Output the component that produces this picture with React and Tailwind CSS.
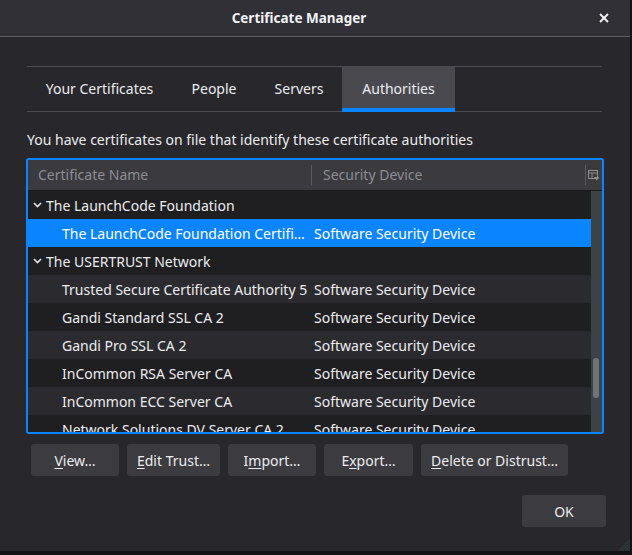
import React from 'react';

const FONT = { fontFamily: '"Noto Sans", "Open Sans", sans-serif' };

const TABS = [
  { label: 'Your Certificates', w: 'w-[145px]' },
  { label: 'People', w: 'w-[84px]' },
  { label: 'Servers', w: 'w-[86px]' },
  { label: 'Authorities', w: 'w-[113px]', active: true },
];

const ROWS = [
  { group: true, name: 'The LaunchCode Foundation' },
  { name: 'The LaunchCode Foundation Certifi…', device: 'Software Security Device', selected: true },
  { group: true, name: 'The USERTRUST Network' },
  { name: 'Trusted Secure Certificate Authority 5', device: 'Software Security Device' },
  { name: 'Gandi Standard SSL CA 2', device: 'Software Security Device' },
  { name: 'Gandi Pro SSL CA 2', device: 'Software Security Device' },
  { name: 'InCommon RSA Server CA', device: 'Software Security Device' },
  { name: 'InCommon ECC Server CA', device: 'Software Security Device' },
  { name: 'Network Solutions DV Server CA 2', device: 'Software Security Device' },
];

const BUTTONS = [
  { pre: '', key: 'V', post: 'iew…', w: 'w-[88px]' },
  { pre: '', key: 'E', post: 'dit Trust…', w: 'w-[93px]' },
  { pre: 'I', key: 'm', post: 'port…', w: 'w-[88px]' },
  { pre: 'E', key: 'x', post: 'port…', w: 'w-[89px]' },
  { pre: '', key: 'D', post: 'elete or Distrust…', w: 'w-[147px]' },
];

function Chevron() {
  return (
    <svg width="9" height="6" viewBox="0 0 9 6" className="shrink-0">
      <polyline points="1,1 4.5,4.5 8,1" fill="none" stroke="#e6e6ea" strokeWidth="1.6" />
    </svg>
  );
}

function ColumnPicker() {
  return (
    <svg width="12" height="11" viewBox="0 0 12 11">
      <rect x="0.5" y="0.5" width="9" height="8" fill="none" stroke="#8d8d92" />
      <line x1="0.5" y1="3" x2="9.5" y2="3" stroke="#8d8d92" />
      <line x1="4" y1="3" x2="4" y2="8.5" stroke="#8d8d92" />
      <polygon points="6,7 11.5,7 8.75,10.5" fill="#8d8d92" />
    </svg>
  );
}

export default function App() {
  return (
    <div className="w-[632px] h-[555px] bg-[#141416] overflow-hidden text-[#ececef]" style={FONT}>
      <div className="h-[551px] w-[630px] bg-[#28282c] flex flex-col relative">
        {/* Title bar */}
        <div className="h-[37px] shrink-0 bg-[#303036] border-b border-[#5d5d63] flex items-center justify-center pr-[32px] relative">
          <span className="text-[13.5px] font-bold text-[#f2f2f4]">Certificate Manager</span>
          <svg width="10" height="10" viewBox="0 0 10 10" className="absolute left-[599px] top-[13px]">
            <line x1="1" y1="1" x2="9" y2="9" stroke="#f4f4f6" strokeWidth="1.8" />
            <line x1="9" y1="1" x2="1" y2="9" stroke="#f4f4f6" strokeWidth="1.8" />
          </svg>
        </div>

        {/* Tabs */}
        <div className="mt-[29px] ml-[27px] w-[575px] h-[46px] border-t border-b border-[#4b4b51] flex">
          {TABS.map((t) => (
            <div
              key={t.label}
              className={`${t.w} flex items-center justify-center text-[14px] pb-[2px] ${
                t.active ? 'bg-[#49494f] border-b-4 border-[#0a84ff] -mb-px pt-[3px]' : ''
              }`}
            >
              {t.label}
            </div>
          ))}
        </div>

        <div className="mt-[18px] ml-[27px] h-[20px] leading-[20px] text-[14px]">
          You have certificates on file that identify these certificate authorities
        </div>

        {/* Tree */}
        <div className="mt-[8px] ml-[26px] w-[578px] h-[276px] border-2 border-[#0a84ff] rounded-[3px] overflow-hidden flex flex-col">
          <div className="h-[31px] shrink-0 bg-[#3a3a3f] border-b border-[#1c1c1f] flex items-center pb-[1px] text-[14px] text-[#8d8d92]">
            <div className="w-[283px] pl-[10px]">Certificate Name</div>
            <div className="w-px h-[20px] bg-[#5a5a60]" />
            <div className="w-[273px] pl-[11px]">Security Device</div>
            <div className="w-px h-[20px] bg-[#5a5a60]" />
            <div className="pl-[2px] pt-[2px]">
              <ColumnPicker />
            </div>
          </div>
          <div className="flex flex-1 min-h-0">
            <div className="flex-1 overflow-hidden">
              {ROWS.map((r, i) => (
                <div
                  key={i}
                  className={`h-[28px] flex items-center text-[14px] whitespace-nowrap ${
                    r.selected ? 'bg-[#0a84ff] text-white' : i % 2 === 0 ? 'bg-[#1f1f22]' : 'bg-[#2b2b2f]'
                  }`}
                >
                  {r.group ? (
                    <div className="flex items-center gap-[4px] pl-[5px]">
                      <Chevron />
                      <span>{r.name}</span>
                    </div>
                  ) : (
                    <>
                      <div className="w-[283px] pl-[34px] overflow-hidden">{r.name}</div>
                      <div className="pl-[3px]">{r.device}</div>
                    </>
                  )}
                </div>
              ))}
            </div>
            <div className="w-[11px] shrink-0 bg-[#3a4447] relative">
              <div className="absolute left-[2px] top-[167px] w-[6px] h-[40px] rounded-full bg-[#6c7577]" />
            </div>
          </div>
        </div>

        {/* Action buttons */}
        <div className="mt-[10px] ml-[31px] flex gap-[8px]">
          {BUTTONS.map((b) => (
            <div
              key={b.post}
              className={`${b.w} h-[32px] rounded-[3px] bg-[#3b3b40] flex items-center justify-center text-[14px]`}
            >
              {b.pre}
              <span className="underline underline-offset-2">{b.key}</span>
              {b.post}
            </div>
          ))}
        </div>

        <div className="mt-[19px] ml-[522px] w-[84px] h-[32px] rounded-[3px] bg-[#3b3b40] flex items-center justify-center text-[14px]">
          OK
        </div>

        {/* resize grip */}
        <svg width="12" height="12" viewBox="0 0 12 12" className="absolute right-0 bottom-0">
          <line x1="12" y1="1" x2="1" y2="12" stroke="#2f3a3a" strokeWidth="1.2" />
          <line x1="12" y1="4" x2="4" y2="12" stroke="#2f3a3a" strokeWidth="1.2" />
          <line x1="12" y1="7" x2="7" y2="12" stroke="#2f3a3a" strokeWidth="1.2" />
          <line x1="12" y1="10" x2="10" y2="12" stroke="#2f3a3a" strokeWidth="1.2" />
        </svg>
      </div>
    </div>
  );
}
